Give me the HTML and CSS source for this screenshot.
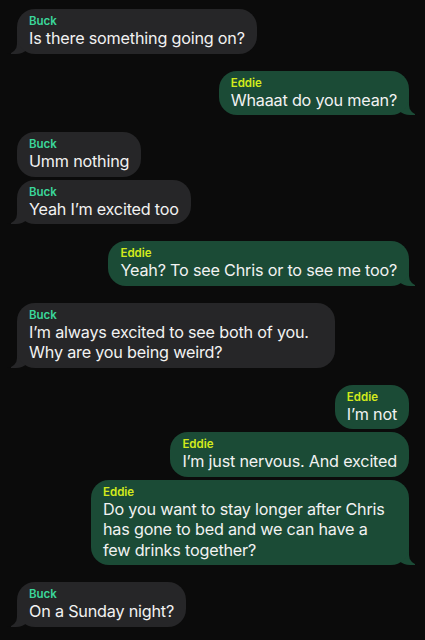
FILE: index.html
```html
<!DOCTYPE html>
<html lang="en">
<head>
  <meta charset="UTF-8">
  <meta name="viewport" content="width=device-width, initial-scale=1.0">
  <title>Chat</title>
  <link rel="stylesheet" href="styles.css">
</head>
<body>
  <div class="chat">
    <div class="group them">
      <div class="msg tail"><span class="name">Buck</span><p>Is there something going on?</p></div>
    </div>
    <div class="group me">
      <div class="msg tail"><span class="name">Eddie</span><p>Whaaat do you mean?</p></div>
    </div>
    <div class="group them">
      <div class="msg"><span class="name">Buck</span><p>Umm nothing</p></div>
      <div class="msg tail"><span class="name">Buck</span><p>Yeah I’m excited too</p></div>
    </div>
    <div class="group me">
      <div class="msg tail"><span class="name">Eddie</span><p>Yeah? To see Chris or to see me too?</p></div>
    </div>
    <div class="group them">
      <div class="msg tail"><span class="name">Buck</span><p>I’m always excited to see both of you. Why are you being weird?</p></div>
    </div>
    <div class="group me">
      <div class="msg"><span class="name">Eddie</span><p>I’m not</p></div>
      <div class="msg"><span class="name">Eddie</span><p>I’m just nervous. And excited</p></div>
      <div class="msg tail"><span class="name">Eddie</span><p>Do you want to stay longer after Chris has gone to bed and we can have a few drinks together?</p></div>
    </div>
    <div class="group them">
      <div class="msg tail"><span class="name">Buck</span><p>On a Sunday night?</p></div>
    </div>
  </div>
</body>
</html>
```

FILE: styles.css
```css
body { margin: 0; background: #0b0b0b; font-family: Inter, "Noto Sans", sans-serif; color: #f2f2f2; }
.chat { display: flex; flex-direction: column; gap: 17px; padding: 9px 16px 0 17px; }
.group { display: flex; flex-direction: column; gap: 3px; }
.group.them { align-items: flex-start; }
.group.me { align-items: flex-end; }

.msg { position: relative; max-width: 318px; box-sizing: border-box; padding: 5px 12px 5px; border-radius: 18px; }
.them .msg { background: #262628; }
.me .msg { background: #1b4b36; }
.name { display: block; font-size: 11.5px; line-height: 14px; font-weight: 600; }
.them .name { color: #3bd69b; }
.me .name { color: #d3ea1c; }
.msg p { margin: 0; font-size: 16.2px; line-height: 20.5px; letter-spacing: -0.2px; }

/* bubble tails */
.msg.tail::before, .msg.tail::after { content: ""; position: absolute; bottom: 0; height: 20px; z-index: -1; }
.them .msg.tail::before { left: -6px; width: 20px; background: #262628; border-bottom-right-radius: 15px 14px; }
.them .msg.tail::after { left: -26px; width: 26px; background: #0b0b0b; border-bottom-right-radius: 10px; }
.me .msg.tail::before { right: -6px; width: 20px; background: #1b4b36; border-bottom-left-radius: 15px 14px; }
.me .msg.tail::after { right: -26px; width: 26px; background: #0b0b0b; border-bottom-left-radius: 10px; }
```
